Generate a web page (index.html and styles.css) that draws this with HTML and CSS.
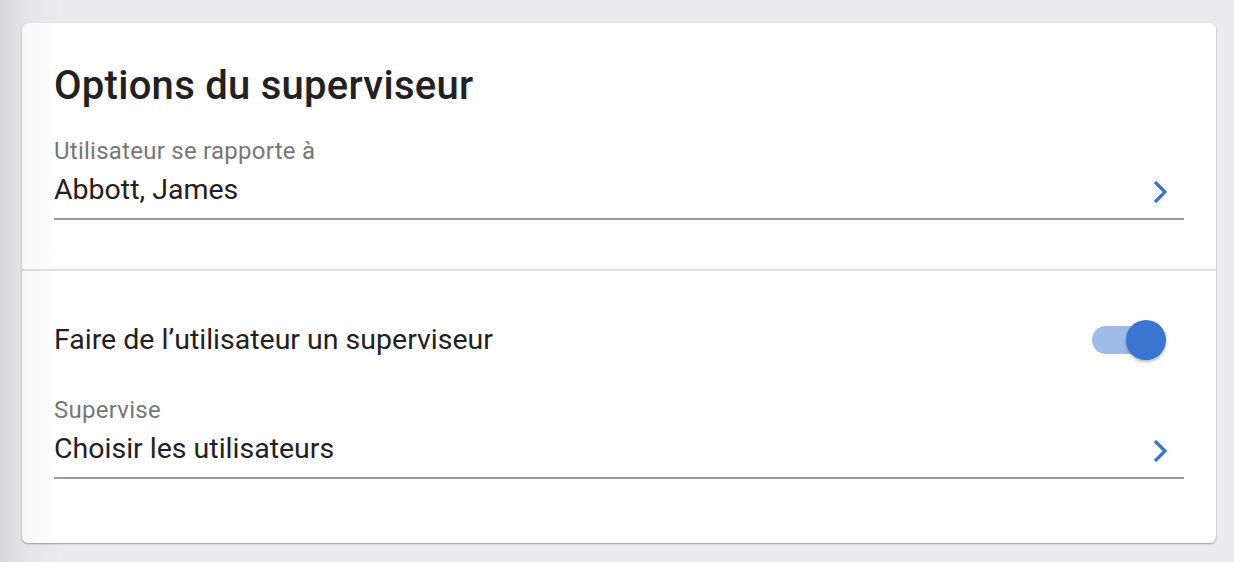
FILE: index.html
```html
<!DOCTYPE html>
<html lang="fr">
<head>
<meta charset="utf-8">
<title>Options du superviseur</title>
<link rel="stylesheet" href="styles.css">
</head>
<body>
<div class="page">
  <div class="card">
    <section class="section section-top">
      <h1 class="title">Options du superviseur</h1>
      <div class="field">
        <div class="field-label">Utilisateur se rapporte à</div>
        <div class="field-row">
          <span class="field-value">Abbott, James</span>
          <svg class="chevron" viewBox="0 0 16 24" width="16" height="24"><path d="M3 2 L13 12 L3 22" fill="none" stroke="#3a75cf" stroke-width="3.2"/></svg>
        </div>
      </div>
    </section>
    <section class="section section-bottom">
      <div class="toggle-row">
        <span class="toggle-text">Faire de l’utilisateur un superviseur</span>
        <span class="switch"><span class="switch-track"></span><span class="switch-thumb"></span></span>
      </div>
      <div class="field field-second">
        <div class="field-label">Supervise</div>
        <div class="field-row">
          <span class="field-value">Choisir les utilisateurs</span>
          <svg class="chevron" viewBox="0 0 16 24" width="16" height="24"><path d="M3 2 L13 12 L3 22" fill="none" stroke="#3a75cf" stroke-width="3.2"/></svg>
        </div>
      </div>
    </section>
  </div>
  <div class="edge-shade"></div>
</div>
</body>
</html>
```
FILE: styles.css
```css
html, body {
  margin: 0;
  padding: 0;
}
body {
  background: #ececee;
  font-family: Roboto, "Liberation Sans", sans-serif;
  color: #212121;
}
.page {
  position: relative;
  width: 1234px;
  height: 562px;
  padding: 23px 18px 0 22px;
  box-sizing: border-box;
  overflow: hidden;
}
.edge-shade {
  position: absolute;
  left: 0;
  top: 0;
  bottom: 0;
  width: 60px;
  background: linear-gradient(to right, rgba(0,0,0,0.09), rgba(0,0,0,0.03) 40%, rgba(0,0,0,0));
  pointer-events: none;
}
.card {
  width: 1194px;
  height: 520px;
  background: #ffffff;
  border-radius: 6px;
  box-shadow: 0 1px 2px rgba(0,0,0,0.35), 0 0 1px rgba(0,0,0,0.08);
  box-sizing: border-box;
}
.section {
  padding: 0 32px;
}
.section-top {
  padding-top: 39px;
  padding-bottom: 49px;
  border-bottom: 2px solid #e0e0e0;
}
.title {
  margin: 0 0 27px;
  font-size: 40px;
  font-weight: 500;
  line-height: 48px;
  letter-spacing: 0.27px;
  color: #212121;
}
.field-label {
  font-size: 24px;
  line-height: 28px;
  letter-spacing: 0.25px;
  color: #777777;
}
.field-row {
  display: flex;
  align-items: center;
  justify-content: space-between;
  margin-top: 8px;
  padding-bottom: 11px;
  border-bottom: 2px solid #9a9a9a;
}
.field-value {
  font-size: 28.5px;
  line-height: 34px;
  color: #212121;
}
.chevron {
  margin-right: 16px;
  margin-top: 4px;
}
.section-bottom {
  padding-top: 49px;
}
.toggle-row {
  display: flex;
  align-items: center;
  justify-content: space-between;
  height: 40px;
}
.toggle-text {
  font-size: 28.5px;
  line-height: 34px;
}
.field-second {
  margin-top: 36px;
}
.switch {
  position: relative;
  width: 74px;
  height: 40px;
  margin-right: 18px;
}
.switch-track {
  position: absolute;
  left: 0;
  top: 6px;
  width: 72px;
  height: 28px;
  border-radius: 14px;
  background: #9fbbe7;
}
.switch-thumb {
  position: absolute;
  right: 0;
  top: 0;
  width: 40px;
  height: 40px;
  border-radius: 50%;
  background: #3a75cf;
  box-shadow: 0 2px 3px rgba(0,0,0,0.28);
}
```
